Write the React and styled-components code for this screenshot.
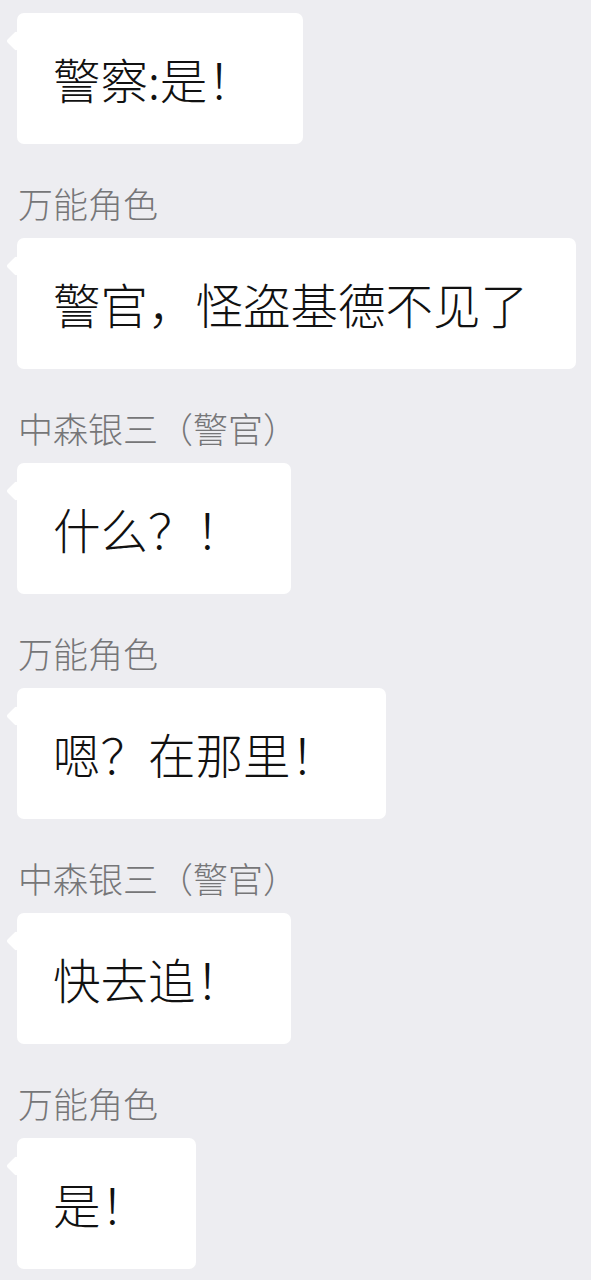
import React from 'react'
import styled, { createGlobalStyle } from 'styled-components'

const Global = createGlobalStyle`
    html, body {
        margin: 0;
        padding: 0;
        background: #ededf1;
    }
    body {
        font-family: "Noto Sans CJK SC", "Noto Sans", sans-serif;
    }
`

const Chat = styled.div`
    display: flex;
    flex-direction: column;
    align-items: flex-start;
    padding: 13px 0 0 17px;
    min-height: 1280px;
    box-sizing: border-box;
`

const Msg = styled.div`
    display: flex;
    flex-direction: column;
    align-items: flex-start;
`

const Name = styled.div`
    margin: 35px 0 11px 1px;
    font-size: 35px;
    font-weight: 300;
    line-height: 48px;
    color: #767678;
    white-space: nowrap;
`

const Bubble = styled.div`
    position: relative;
    box-sizing: border-box;
    height: 131px;
    padding: 0 48px 0 36px;
    background: #ffffff;
    border-radius: 7px;
    font-size: 47.5px;
    font-weight: 300;
    line-height: 131px;
    color: #111111;
    white-space: nowrap;

    &::before {
        content: '';
        position: absolute;
        left: -8px;
        top: 21px;
        width: 14px;
        height: 14px;
        background: #ffffff;
        border-radius: 2px;
        transform: rotate(45deg);
    }
`

const messages = [
    { text: '警察:是！' },
    { name: '万能角色', text: '警官，怪盗基德不见了' },
    { name: '中森银三（警官）', text: '什么？！' },
    { name: '万能角色', text: '嗯？在那里！' },
    { name: '中森银三（警官）', text: '快去追！' },
    { name: '万能角色', text: '是！' },
]

export default function App() {
    return (
        <>
            <Global />
            <Chat>
                {messages.map((m, i) => (
                    <Msg key={i}>
                        {m.name && <Name>{m.name}</Name>}
                        <Bubble>{m.text}</Bubble>
                    </Msg>
                ))}
            </Chat>
        </>
    )
}
